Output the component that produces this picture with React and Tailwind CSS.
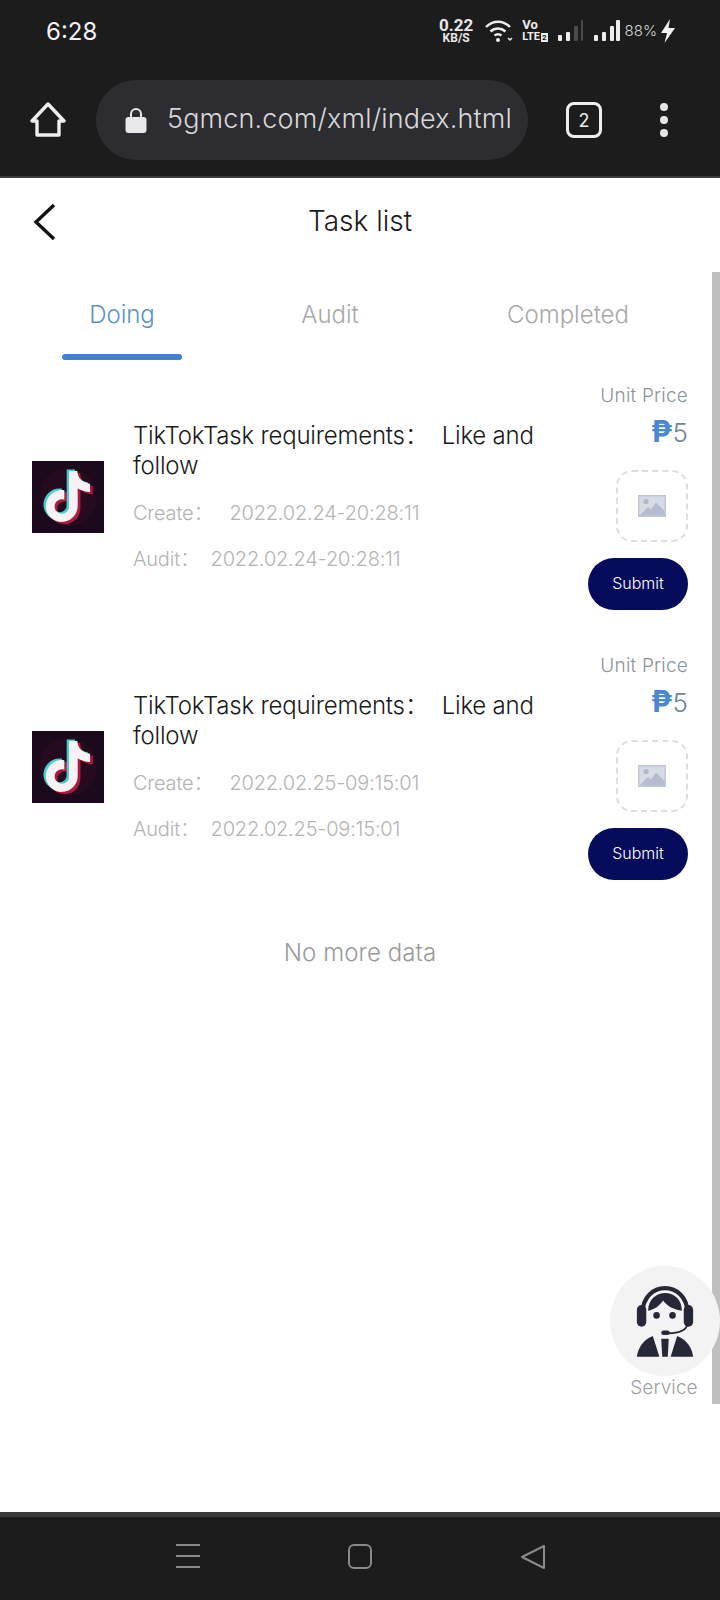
const TT = "M12.525.02c1.31-.02 2.61-.01 3.91-.02.08 1.53.63 3.09 1.75 4.17 1.12 1.11 2.7 1.62 4.24 1.79v4.03c-1.44-.05-2.89-.35-4.2-.97-.57-.26-1.1-.59-1.62-.93-.01 2.92.01 5.84-.02 8.75-.08 1.4-.54 2.79-1.35 3.94-1.31 1.92-3.58 3.17-5.91 3.21-1.43.08-2.86-.31-4.08-1.03-2.02-1.19-3.44-3.37-3.65-5.71-.02-.5-.03-1-.01-1.49.18-1.9 1.12-3.72 2.58-4.96 1.66-1.44 3.98-2.13 6.15-1.72.02 1.48-.04 2.96-.04 4.44-.99-.32-2.15-.23-3.02.37-.63.41-1.11 1.04-1.36 1.75-.21.51-.15 1.07-.14 1.61.24 1.64 1.82 3.02 3.5 2.87 1.12-.01 2.19-.66 2.77-1.61.19-.33.4-.67.41-1.06.1-1.79.06-3.57.07-5.36.01-4.03-.01-8.05.02-12.07z";

function TikTok() {
  return (
    <svg width="72" height="72" viewBox="0 0 72 72" className="shrink-0">
      <rect width="72" height="72" fill="#1a0a1c" />
      <circle cx="36" cy="36" r="29" fill="#260b1e" />
      <g transform="translate(10.5 10) scale(2.12)">
        <path d={TT} fill="#b01a40" transform="translate(1.3 1)" />
        <path d={TT} fill="#45cdd2" transform="translate(-1.1 -0.7)" />
        <path d={TT} fill="#f7f3f4" />
      </g>
    </svg>
  );
}

function Cell({ date }) {
  return (
    <div className="flex h-[232px] pl-[32px] pr-[32px] items-start">
      <div className="mt-[79px]"><TikTok /></div>
      <div className="ml-[29px] w-[413px] pt-[39px]">
        <div className="text-[24px] leading-[30px] tracking-[-0.2px] text-[#1a1a1a]">TikTokTask requirements：&nbsp;&nbsp;Like and follow</div>
        <div className="mt-[17px] text-[20px] leading-[30px] tracking-[-0.2px] text-[#b4b4b4]">Create：&nbsp;&nbsp;&nbsp;{date}</div>
        <div className="mt-[16px] text-[20px] leading-[30px] tracking-[-0.2px] text-[#b4b4b4]">Audit：&nbsp;&nbsp;{date}</div>
      </div>
      <div className="flex-1 flex flex-col items-end pt-[1px]">
        <div className="text-[19px] leading-[26px] tracking-[0.2px] text-[#8a949c] whitespace-nowrap">Unit Price</div>
        <div className="mt-[6px] text-[26px] leading-[32px] whitespace-nowrap"><span className="text-[#4a88d4] font-bold text-[30px]">₱</span><span className="text-[#6f8596]">5</span></div>
        <div className="mt-[21px] w-[72px] h-[72px] rounded-[16px] border-2 border-dashed border-[#dcdee0] flex items-center justify-center">
          <svg width="28" height="22" viewBox="0 0 28 22">
            <rect width="28" height="22" fill="#c0c4d6" />
            <rect x="1.5" y="1.5" width="25" height="19" fill="#d8dbe6" />
            <circle cx="8" cy="6.5" r="2.6" fill="#b2b7cc" />
            <path d="M1.5 20.5 L10 12 L13 14.5 L18 7.5 L26.5 16 V20.5 Z" fill="#b6bbd0" />
          </svg>
        </div>
        <div className="mt-[16px] w-[100px] h-[52px] pb-[2px] rounded-full bg-[#070b5c] text-white text-[16px] flex items-center justify-center shrink-0">Submit</div>
      </div>
    </div>
  );
}

function Agent() {
  return (
    <svg width="60" height="74" viewBox="0 0 64 76">
      <path d="M8 30 C8 12 20 3 32 3 C44 3 56 12 56 30" fill="none" stroke="#262838" strokeWidth="4.5" />
      <rect x="2" y="21" width="10" height="23" rx="5" fill="#262838" />
      <rect x="52" y="21" width="10" height="23" rx="5" fill="#262838" />
      <path d="M14 27 C14 14 24 8 32 8 C42 8 50 15 50 27 C42 26 34 22 30 16 C26 22 20 26 14 27 Z" fill="#262838" />
      <circle cx="23" cy="32" r="3.5" fill="#262838" />
      <circle cx="40" cy="32" r="3.5" fill="#262838" />
      <path d="M56 42 C54 48 46 51 36 51" fill="none" stroke="#262838" strokeWidth="2" />
      <rect x="28" y="48" width="9" height="5" rx="2.5" fill="#262838" />
      <path d="M2 76 C3 68 8 58 19 54 L26 76 Z" fill="#262838" />
      <path d="M62 76 C61 68 56 58 45 54 L38 76 Z" fill="#262838" />
      <path d="M28 57 H36 L35 76 H29 Z" fill="#262838" />
    </svg>
  );
}

export default function App() {
  return (
    <div className="relative w-[720px] h-[1600px] overflow-hidden bg-white flex flex-col font-['Inter','Noto_Sans_CJK_SC',sans-serif] font-light">
      {/* system + browser chrome */}
      <div className="h-[178px] shrink-0 bg-[#1c1c1d] border-b-2 border-[#3a3a3c] flex flex-col text-white">
        <div className="h-[62px] flex items-center pl-[46px] pr-[45px] justify-between">
          <span className="text-[24px] font-normal text-[#f2f2f2] mt-[1px]">6:28</span>
          <div className="flex items-center">
            <div className="flex flex-col items-center leading-none font-bold font-['Roboto',sans-serif] text-[#e8e8e8]">
              <span className="text-[17px] leading-[15px]">0.22</span>
              <span className="text-[12px] leading-[11px]">KB/S</span>
            </div>
            <svg className="ml-[11px]" width="30" height="24" viewBox="0 0 30 24" fill="none" stroke="#ececec" strokeWidth="2.4">
              <path d="M2 8 C9 1 19 1 26 8" />
              <path d="M6.5 12.5 C11 8.5 17 8.5 21.5 12.5" />
              <path d="M10.5 16.5 C12.5 15 15.5 15 17.5 16.5" />
              <circle cx="14" cy="21" r="2" fill="#ececec" stroke="none" />
              <path d="M24 19 L26 21 L28 19" strokeWidth="1.5" />
            </svg>
            <div className="ml-[8px] flex flex-col leading-none font-bold font-['Roboto',sans-serif] text-[#ececec]">
              <span className="text-[13px] leading-[12px]">Vo</span>
              <span className="text-[11px] leading-[11px] whitespace-nowrap">LTE<span className="bg-[#ececec] text-[#1c1c1d] text-[8px] px-[1px] ml-[1px]">2</span></span>
            </div>
            <svg className="ml-[9px]" width="26" height="24" viewBox="0 0 26 24">
              <rect x="1" y="16" width="4" height="6" rx="1" fill="#ececec" />
              <rect x="9" y="13" width="4" height="9" rx="1" fill="#ececec" />
              <rect x="17" y="7" width="4" height="15" rx="1" fill="#4a4a4a" />
              <rect x="24" y="1" width="2" height="21" rx="1" fill="#4a4a4a" />
            </svg>
            <svg className="ml-[10px]" width="27" height="24" viewBox="0 0 27 24">
              <rect x="1" y="16" width="4" height="6" rx="1" fill="#ececec" />
              <rect x="9" y="13" width="4" height="9" rx="1" fill="#ececec" />
              <rect x="17" y="7" width="4" height="15" rx="1" fill="#ececec" />
              <rect x="23" y="1" width="4" height="21" rx="1" fill="#ececec" />
            </svg>
            <span className="ml-[5px] text-[15px] text-[#d8d8d8]">88%</span>
            <svg className="ml-[4px]" width="14" height="24" viewBox="0 0 14 24"><path d="M9 0 L0 14 H6 L3.5 24 L14 9 H7.5 Z" fill="#f2f2f2" /></svg>
          </div>
        </div>
        <div className="flex items-center h-[80px] mt-[18px]">
          <svg className="ml-[30px]" width="36" height="36" viewBox="0 0 36 36" fill="none" stroke="#eeeeee" strokeWidth="3.4" strokeLinejoin="round">
            <path d="M18 2 L34 19 H29 V33 H7 V19 H2 Z" />
          </svg>
          <div className="ml-[30px] w-[432px] h-[80px] rounded-full bg-[#2d2d31] flex items-center pl-[29px]">
            <svg width="22" height="28" viewBox="0 0 22 28">
              <path d="M6 12 V8 A5 5 0 0 1 16 8 V12" fill="none" stroke="#e8e8e8" strokeWidth="2" />
              <rect x="0.5" y="11" width="21" height="16" rx="3" fill="#e8e8e8" />
            </svg>
            <span className="ml-[20px] text-[27px] tracking-[0.15px] text-[#d8d8d8] whitespace-nowrap mt-[-2px]">5gmcn.com/xml/index.html</span>
          </div>
          <div className="ml-[38px] w-[36px] h-[36px] rounded-[8px] border-[3px] border-[#eeeeee] flex items-center justify-center text-[18px] font-normal text-[#eeeeee]">2</div>
          <div className="ml-[58px] flex flex-col gap-[5px]">
            <div className="w-[8px] h-[8px] rounded-full bg-[#e4e4e4]" />
            <div className="w-[8px] h-[8px] rounded-full bg-[#e4e4e4]" />
            <div className="w-[8px] h-[8px] rounded-full bg-[#e4e4e4]" />
          </div>
        </div>
      </div>

      {/* page title */}
      <div className="relative h-[86px] shrink-0 flex items-center justify-center text-[28px] text-[#1a1a1a]">
        <svg className="absolute left-[31px] top-[25px]" width="26" height="38" viewBox="0 0 26 38" fill="none" stroke="#111111" strokeWidth="3.4"><path d="M23 2 L5 19 L23 36" /></svg>
        <span>Task list</span>
      </div>

      {/* tabs */}
      <div className="relative h-[96px] shrink-0 text-[24px]">
        <div className="flex h-[90px] pt-[12px] items-center">
          <div className="w-[244px] text-center text-[#5b93c4]">Doing</div>
          <div className="w-[172px] text-center text-[#a8a8a8]">Audit</div>
          <div className="w-[304px] text-center text-[#a8a8a8]">Completed</div>
        </div>
        <div className="absolute left-[62px] top-[90px] w-[120px] h-[6px] rounded-full bg-[#4080dc]" />
      </div>

      {/* list */}
      <div className="pt-[22px]">
        <div className="h-[270px]"><Cell date="2022.02.24-20:28:11" /></div>
        <div className="h-[270px]"><Cell date="2022.02.25-09:15:01" /></div>
      </div>
      <div className="text-center text-[24px] tracking-[0.1px] text-[#9a9a9a] mt-[13px]">No more data</div>

      <div className="flex-1" />

      {/* bottom nav */}
      <div className="h-[88px] shrink-0 bg-[#1c1c1d] border-t-[5px] border-[#3a3a3c] flex items-start pt-[27px]">
        <div className="ml-[176px] w-[24px] flex flex-col gap-[9px]">
          <div className="h-[2px] bg-[#8a8a8a]" />
          <div className="h-[2px] bg-[#8a8a8a]" />
          <div className="h-[2px] bg-[#8a8a8a]" />
        </div>
        <div className="ml-[148px] w-[24px] h-[25px] rounded-[6px] border-2 border-[#8a8a8a]" />
        <svg className="ml-[148px]" width="26" height="26" viewBox="0 0 26 26" fill="none" stroke="#8a8a8a" strokeWidth="2" strokeLinejoin="round"><path d="M24 2 V24 L2 13 Z" /></svg>
      </div>

      {/* scrollbar */}
      <div className="absolute right-0 top-[272px] w-[8px] h-[1132px] bg-[#bfbfbf]" />

      {/* floating service */}
      <div className="absolute left-[610px] top-[1266px] w-[110px] flex flex-col items-center">
        <div className="w-[110px] h-[110px] rounded-full bg-[#f3f3f4] flex items-center justify-center"><Agent /></div>
        <span className="text-[19px] leading-[22px] tracking-[0.1px] text-[#a0a0a0] ml-[-2px] mt-[1px]">Service</span>
      </div>
    </div>
  );
}
